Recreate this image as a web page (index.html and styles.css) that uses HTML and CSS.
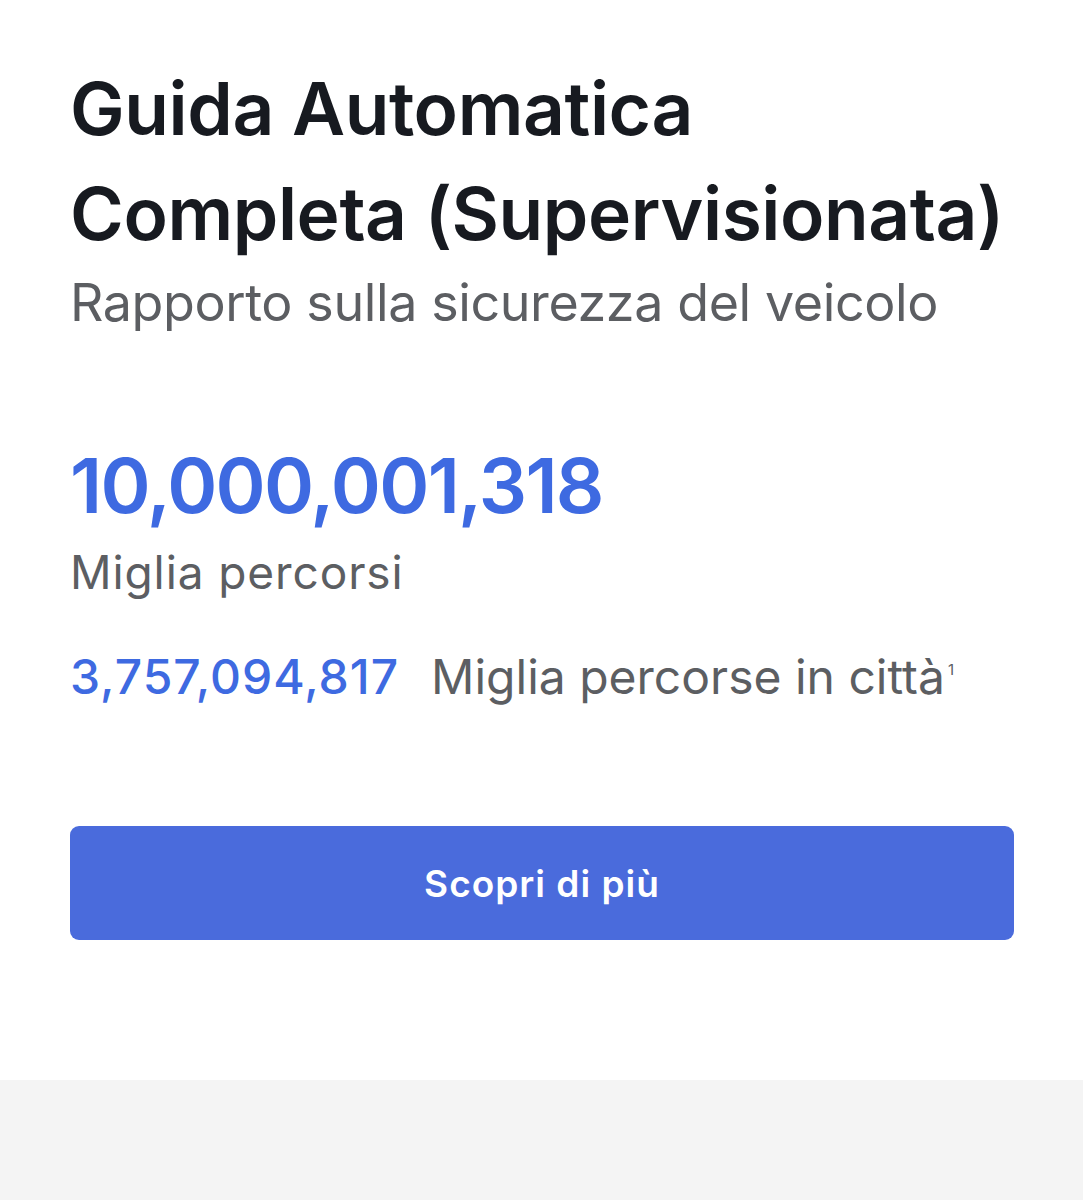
FILE: index.html
```html
<!DOCTYPE html>
<html lang="it">
<head>
<meta charset="utf-8">
<title>Guida Automatica Completa</title>
<link rel="stylesheet" href="styles.css">
</head>
<body>
<main class="card">
  <h1 class="title">Guida Automatica<br>Completa (Supervisionata)</h1>
  <p class="subtitle">Rapporto sulla sicurezza del veicolo</p>
  <div class="stat">
    <div class="big-number">10,000,001,318</div>
    <div class="big-label">Miglia percorsi</div>
  </div>
  <div class="city">
    <span class="city-number">3,757,094,817</span>
    <span class="city-label">Miglia percorse in città<sup class="note">1</sup></span>
  </div>
  <a class="button" href="#">Scopri di più</a>
</main>
<footer class="footer"></footer>
</body>
</html>
```

FILE: styles.css
```css
html, body {
  margin: 0;
  padding: 0;
  background: #ffffff;
}
body {
  font-family: Inter, "Noto Sans", sans-serif;
  -webkit-font-smoothing: antialiased;
}
.card {
  padding: 56px 70px 0 70px;
  height: 1080px;
  box-sizing: border-box;
}
.title {
  margin: 0;
  font-size: 73px;
  line-height: 105px;
  font-weight: 600;
  color: #171a20;
  letter-spacing: -0.4px;
  white-space: nowrap;
}
.subtitle {
  margin: 7px 0 0 0;
  font-size: 52px;
  line-height: 60px;
  font-weight: 400;
  color: #5c5e62;
  letter-spacing: -0.4px;
}
.stat {
  margin-top: 107px;
}
.big-number {
  font-size: 76px;
  line-height: 90px;
  font-weight: 600;
  color: #3e6ae1;
  letter-spacing: -1.7px;
}
.big-label {
  margin-top: 12px;
  font-size: 46px;
  line-height: 60px;
  color: #5c5e62;
  letter-spacing: 0.9px;
}
.city {
  margin-top: 46px;
  display: flex;
  align-items: baseline;
  gap: 32px;
  line-height: 58px;
}
.city-number {
  font-size: 48px;
  font-weight: 500;
  color: #3e6ae1;
  letter-spacing: 1px;
}
.city-label {
  font-size: 48px;
  color: #5c5e62;
  letter-spacing: 0;
}
.note {
  font-size: 15px;
  line-height: 1;
  vertical-align: top;
  position: relative;
  top: 14px;
  margin-left: 3px;
}
.button {
  margin-top: 120px;
  display: flex;
  align-items: center;
  justify-content: center;
  height: 114px;
  width: 944px;
  border-radius: 9px;
  background: #4a6bdc;
  color: #ffffff;
  font-size: 37px;
  font-weight: 600;
  letter-spacing: 1px;
  text-decoration: none;
}
.footer {
  background: #f4f4f4;
  height: 120px;
}
```
